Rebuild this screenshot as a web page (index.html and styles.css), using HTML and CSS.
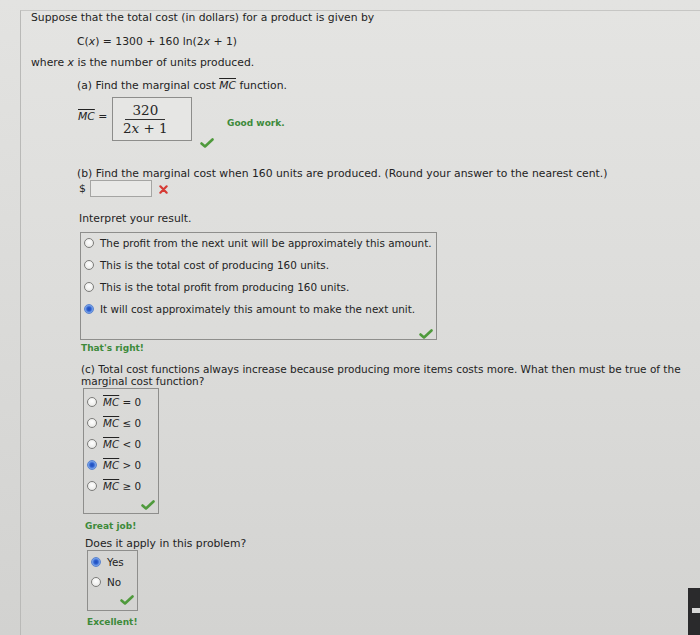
FILE: index.html
```html
<!DOCTYPE html>
<html>
<head>
<meta charset="utf-8">
<link rel="stylesheet" href="styles.css">
</head>
<body>
<div class="screen">
  <div class="ln l1">Suppose that the total cost (in dollars) for a product is given by</div>
  <div class="ln l2">C(<i>x</i>) = 1300 + 160 ln(2<i>x</i> + 1)</div>
  <div class="ln l3">where <i>x</i> is the number of units produced.</div>
  <div class="ln l4">(a) Find the marginal cost <span class="mc">MC</span> function.</div>
  <div class="mcrow">
    <div class="mclabel"><span class="mc">MC</span> =</div>
    <div class="fracbox">
      <div class="frac">
        <span class="num">320</span>
        <span class="den">2<i>x</i> + 1</span>
      </div>
    </div>
    <svg class="chk chk-a" viewBox="0 0 14 10"><path d="M1.5 5.5 L5 8.5 L12.5 1.5" /></svg>
    <div class="good gw">Good work.</div>
  </div>

  <div class="ln lb">(b) Find the marginal cost when 160 units are produced. (Round your answer to the nearest cent.)</div>
  <div class="dollar">
    <span class="dsign">$</span>
    <span class="input"></span>
    <svg class="xmark" viewBox="0 0 10 10"><path d="M1.5 1.5 L8.5 8.5 M8.5 1.5 L1.5 8.5" /></svg>
  </div>
  <div class="ln li">Interpret your result.</div>
  <div class="box box1">
    <div class="opt"><span class="radio"></span>The profit from the next unit will be approximately this amount.</div>
    <div class="opt"><span class="radio"></span>This is the total cost of producing 160 units.</div>
    <div class="opt"><span class="radio"></span>This is the total profit from producing 160 units.</div>
    <div class="opt"><span class="radio on"></span>It will cost approximately this amount to make the next unit.</div>
    <div class="chkrow"><svg class="chk" viewBox="0 0 14 10"><path d="M1.5 5.5 L5 8.5 L12.5 1.5" /></svg></div>
  </div>

  <div class="good tr">That's right!</div>
  <div class="para pc">(c) Total cost functions always increase because producing more items costs more. What then must be true of the marginal cost function?</div>
  <div class="box box2">
    <div class="opt"><span class="radio"></span><span class="mc">MC</span>&nbsp;= 0</div>
    <div class="opt"><span class="radio"></span><span class="mc">MC</span>&nbsp;≤ 0</div>
    <div class="opt"><span class="radio"></span><span class="mc">MC</span>&nbsp;&lt; 0</div>
    <div class="opt"><span class="radio on"></span><span class="mc">MC</span>&nbsp;&gt; 0</div>
    <div class="opt"><span class="radio"></span><span class="mc">MC</span>&nbsp;≥ 0</div>
    <div class="chkrow"><svg class="chk" viewBox="0 0 14 10"><path d="M1.5 5.5 L5 8.5 L12.5 1.5" /></svg></div>
  </div>

  <div class="good gj">Great job!</div>
  <div class="ln ld">Does it apply in this problem?</div>
  <div class="box box3">
    <div class="opt"><span class="radio on"></span>Yes</div>
    <div class="opt"><span class="radio"></span>No</div>
    <div class="chkrow"><svg class="chk" viewBox="0 0 14 10"><path d="M1.5 5.5 L5 8.5 L12.5 1.5" /></svg></div>
  </div>
  <div class="good ex">Excellent!</div>
</div>
<div class="bezel"></div>
</body>
</html>
```

FILE: styles.css
```css
html, body {
  margin: 0;
  padding: 0;
}
body {
  width: 700px;
  height: 635px;
  overflow: hidden;
  position: relative;
  background: linear-gradient(180deg, #e3e3e1 0%, #dcdcda 40%, #d2d2d0 100%);
  font-family: "DejaVu Sans", Verdana, sans-serif;
  font-size: 10.8px;
  color: #232323;
}
.screen {
  margin-top: 10px;
  margin-left: 20px;
  height: 625px;
  border-top: 1px solid #c6c6c4;
  border-left: 1px solid #b9b9b7;
  box-sizing: border-box;
  background: linear-gradient(180deg, #e4e4e2 0%, #dddddb 45%, #d3d3d1 100%);
}
.ln {
  height: 14px;
  line-height: 14px;
  white-space: nowrap;
}
.l1 { margin-left: 10px; }
.l2 { margin-left: 56px; margin-top: 10px; }
.l3 { margin-left: 10px; margin-top: 7px; }
.l4 { margin-left: 56px; margin-top: 9px; }
.mc {
  font-style: italic;
  text-decoration: overline;
}
.mcrow {
  display: flex;
  align-items: flex-start;
  margin-top: 4px;
  margin-left: 57px;
  height: 51px;
}
.mclabel {
  width: 34px;
  line-height: 14px;
  margin-top: 13px;
}
.fracbox {
  border: 1px solid #8d8d8b;
  background: #e6e6e4;
  display: flex;
  align-items: center;
  padding-left: 10px;
  box-sizing: border-box;
  width: 80px;
  height: 44px;
}
.frac {
  display: flex;
  flex-direction: column;
  align-items: center;
  font-family: "DejaVu Serif", "Liberation Serif", serif;
  font-size: 13.5px;
  line-height: 17px;
  color: #262626;
}
.num {
  padding: 0 7px;
  border-bottom: 1px solid #333;
}
.den i { font-style: italic; }
.chk {
  width: 14px;
  height: 10px;
  display: block;
}
.chk path {
  fill: none;
  stroke: #4f9a3c;
  stroke-width: 2.6;
  stroke-linecap: round;
  stroke-linejoin: round;
}
.chk-a {
  margin-top: 41px;
  margin-left: 8px;
}
.good {
  color: #3d8a3a;
  font-weight: bold;
  font-size: 9px;
  line-height: 12px;
  height: 12px;
  white-space: nowrap;
}
.gw {
  margin-left: 13px;
  margin-top: 20px;
}
.lb {
  margin-left: 56px;
  margin-top: 20px;
  height: 12px;
  line-height: 12px;
}
.dollar {
  display: flex;
  align-items: center;
  margin-left: 58px;
  height: 17px;
}
.dsign {
  width: 11px;
}
.input {
  width: 60px;
  height: 15px;
  border: 1px solid #a5a5a3;
  background: #e9e9e7;
}
.xmark {
  width: 9px;
  height: 9px;
  margin-left: 7px;
  margin-top: 2px;
}
.xmark path {
  stroke: #d63a34;
  stroke-width: 2.4;
  stroke-linecap: round;
}
.li {
  margin-left: 58px;
  margin-top: 15px;
}
.box {
  border: 1px solid #8e8e8c;
  box-sizing: border-box;
  display: flex;
  flex-direction: column;
  font-size: 10.4px;
}
.box1 {
  margin-left: 59px;
  margin-top: 6px;
  width: 357px;
  height: 108px;
  gap: 2px;
}
.opt {
  display: flex;
  align-items: center;
  height: 20px;
  white-space: nowrap;
}
.radio {
  width: 10px;
  height: 10px;
  border-radius: 50%;
  border: 1px solid #7d7d7b;
  background: radial-gradient(circle at 50% 40%, #ffffff 0%, #eeeeec 60%, #d8d8d6 100%);
  box-sizing: border-box;
  flex: none;
}
.radio.on {
  border-color: #5b84cf;
  background: radial-gradient(circle, #1e4db8 0%, #2d5fd0 35%, #6f9be6 60%, #9cbcf0 100%);
}
.box1 .opt { padding-left: 3px; }
.box1 .radio { margin-right: 6px; }
.chkrow {
  display: flex;
  justify-content: flex-end;
}
.box1 .chkrow {
  margin-top: 8px;
  padding-right: 3px;
}
.tr {
  margin-left: 60px;
  margin-top: 2px;
}
.para {
  margin-left: 60px;
  margin-top: 9px;
  width: 618px;
  font-size: 10.5px;
  line-height: 12px;
}
.box2 {
  margin-left: 62px;
  margin-top: 1px;
  width: 76px;
  height: 126px;
  padding-top: 3px;
  gap: 2px;
}
.box2 .opt { height: 19px; padding-left: 3px; }
.box2 .radio { margin-right: 6px; }
.box2 .chkrow {
  margin-top: 3px;
  padding-right: 3px;
}
.gj {
  margin-left: 64px;
  margin-top: 6px;
}
.ld {
  margin-left: 64px;
  margin-top: 6px;
  height: 12px;
  line-height: 12px;
}
.box3 {
  margin-left: 66px;
  width: 51px;
  height: 61px;
  padding-top: 1px;
  gap: 1px;
}
.box3 .opt { height: 19px; padding-left: 3px; }
.box3 .radio { margin-right: 6px; }
.box3 .chkrow {
  margin-top: 3px;
  padding-right: 3px;
}
.ex {
  margin-left: 66px;
  margin-top: 5px;
}
.bezel {
  position: absolute;
  right: 0;
  top: 588px;
  width: 12px;
  height: 47px;
  background: #2a2a2c;
}
.bezel::after {
  content: "";
  position: absolute;
  left: 4px;
  top: 20px;
  width: 8px;
  height: 5px;
  background: #d8d8d8;
}
```
